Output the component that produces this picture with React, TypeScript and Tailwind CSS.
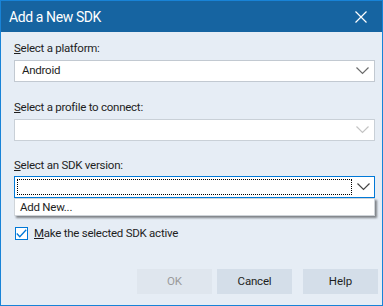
import React from "react";

const Chevron = ({ color }: { color: string }) => (
  <svg width="13" height="8" viewBox="0 0 13 8" className="shrink-0">
    <path d="M0.5 0.5 L6.5 6.5 L12.5 0.5" fill="none" stroke={color} strokeWidth="1.2" />
  </svg>
);

const Label = ({ first, rest }: { first: string; rest: string }) => (
  <div className="h-[16px] text-[11.5px] leading-[16px] tracking-[-0.25px] text-[#1e1e1e]">
    <u>{first}</u>
    {rest}
  </div>
);

const App = () => {
  return (
    <div
      className="w-[383px] h-[306px] border border-[#1883d7] bg-[#e6edf5] flex flex-col"
      style={{ fontFamily: 'Roboto, "Noto Sans", sans-serif' }}
    >
      {/* title bar */}
      <div className="h-[31px] bg-[#1664a1] flex items-center justify-between pl-[8px] pr-[15px] shrink-0">
        <span className="text-[14px] tracking-[-0.4px] text-white leading-none">Add a New SDK</span>
        <svg width="12" height="12" viewBox="0 0 12 12">
          <path d="M0.5 0.5 L11.5 11.5 M11.5 0.5 L0.5 11.5" stroke="#fff" strokeWidth="1.2" />
        </svg>
      </div>

      <div className="pl-[13px] flex flex-col">
        <div className="mt-[8px]">
          <Label first="S" rest="elect a platform:" />
        </div>
        <div className="mt-[4px] w-[361px] h-[22px] bg-white border border-[#c2c9d1] flex items-center justify-between pl-[7px] pr-[5px]">
          <span className="text-[11.5px] tracking-[-0.25px] text-[#1e1e1e]">Android</span>
          <Chevron color="#6b6b6b" />
        </div>

        <div className="mt-[17px]">
          <Label first="S" rest="elect a profile to connect:" />
        </div>
        <div className="mt-[4px] w-[361px] h-[22px] bg-white border border-[#c9d0d7] flex items-center justify-end pr-[5px]">
          <Chevron color="#c4c4c4" />
        </div>

        <div className="mt-[16px]">
          <Label first="S" rest="elect an SDK version:" />
        </div>
        <div className="relative mt-[3px]">
          <div className="w-[361px] h-[22px] bg-white border border-[#0078d7] flex items-center pl-[2px] pr-[4px] gap-[5px]">
            <div className="flex-1 h-[16px] border border-dotted border-black" />
            <Chevron color="#444" />
          </div>
          <div className="absolute left-0 top-[22px] w-[361px] h-[18px] bg-white border border-[#cfd4d9] shadow-[2px_2px_2px_rgba(0,0,0,0.45)] pl-[5px] text-[11.5px] tracking-[-0.25px] leading-[16px] text-[#1e1e1e]">
            Add New...
          </div>
        </div>

        <div className="mt-[27px] flex items-center gap-[6px] ml-[1px]">
          <div className="w-[13px] h-[13px] border border-[#0078d7] bg-white flex items-center justify-center">
            <svg width="11" height="9" viewBox="0 0 11 9">
              <path d="M0.8 4.5 L3.8 7.8 L10.2 0.8" fill="none" stroke="#0078d7" strokeWidth="1.3" />
            </svg>
          </div>
          <span className="text-[11.5px] tracking-[-0.25px] text-[#1e1e1e] leading-[16px]">
            <u>M</u>ake the selected SDK active
          </span>
        </div>
      </div>

      <div className="mt-auto mb-[11px] flex justify-end pr-[4px] gap-[5px]">
        <div className="w-[75px] h-[25px] bg-[#dfe6ee] flex items-center justify-center text-[11.5px] text-[#9a9a9a]">OK</div>
        <div className="w-[75px] h-[25px] bg-[#d4dee9] flex items-center justify-center text-[11.5px] tracking-[-0.2px] text-[#1e1e1e]">Cancel</div>
        <div className="ml-[6px] w-[75px] h-[25px] bg-[#d4dee9] flex items-center justify-center text-[11.5px] text-[#1e1e1e]">Help</div>
      </div>
    </div>
  );
};

export default App;
